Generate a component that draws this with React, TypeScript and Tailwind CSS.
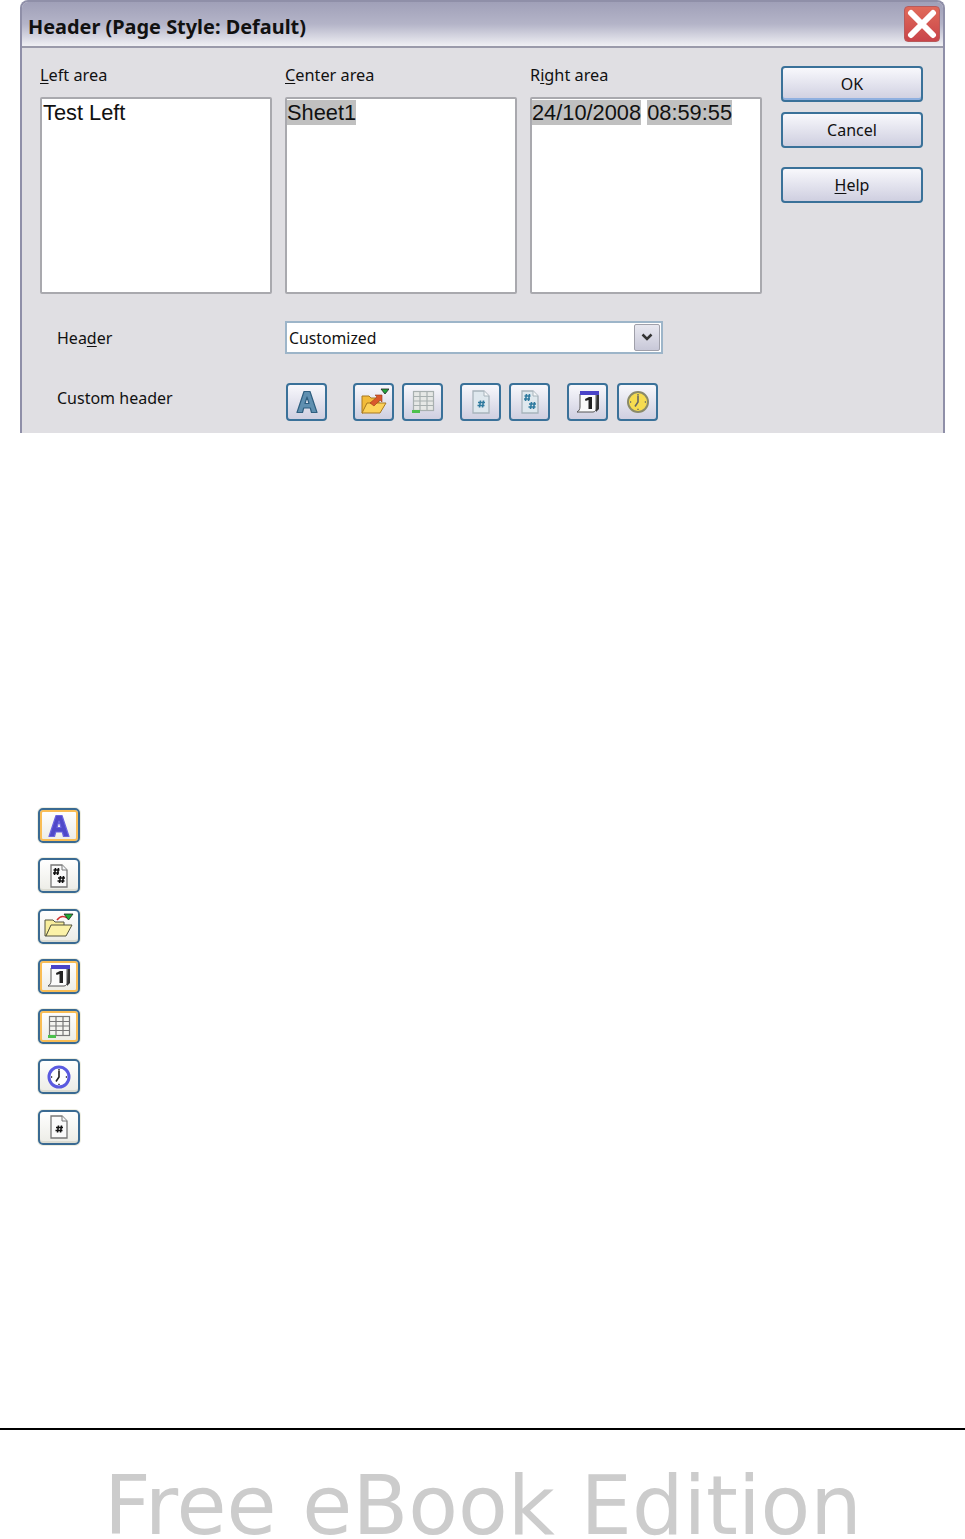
import React from "react";

const ui = "font-['Noto_Sans',sans-serif] text-[#111]";

const Ul = ({ children }: { children: React.ReactNode }) => <span className="underline underline-offset-2">{children}</span>;

const FontA = ({ fill, stroke }: { fill: string; stroke: string }) => (
  <svg width="24" height="26" viewBox="0 0 24 26">
    <path d="M9 2.500h6l7 21h-5.500l-1.200-4.500H8.700L7.500 23.500H2zM12 8l-2 6.500h4z" fill={fill} stroke={stroke} strokeWidth="1.200" strokeLinejoin="round" fillRule="evenodd" />
  </svg>
);

const Folder = () => (
  <svg width="30" height="28" viewBox="0 0 30 28">
    <path d="M3 8h7l2 2h8v6H8l-4 9H3z" fill="#f2bb3a" stroke="#a87820" />
    <path d="M8 15h19l-6 10H3z" fill="#fcd25a" stroke="#a87820" />
    <path d="M11 15l7-6-2-2h7v7l-2-2-6 6z" fill="#d9572c" stroke="#9c3a1a" strokeWidth=".6" />
    <path d="M22 1h8l-4 5z" fill="#22a83a" stroke="#222" strokeWidth=".8" />
  </svg>
);

const FolderPlain = () => (
  <svg width="34" height="26" viewBox="0 0 34 26">
    <path d="M3 7h8l2 2h9v4H9l-5 10H3z" fill="#f8ee9c" stroke="#55553f" />
    <path d="M9 12h21l-6 11H4z" fill="#fbf2a8" stroke="#55553f" />
    <path d="M15 7c3-4 7-4 10-2" fill="none" stroke="#d03030" strokeWidth="1.500" />
    <path d="M22 1h9l-4.500 6z" fill="#1fae35" stroke="#222" strokeWidth=".8" />
  </svg>
);

const Grid = ({ line, bg }: { line: string; bg: string }) => (
  <svg width="24" height="24" viewBox="0 0 24 24">
    <rect x="2.500" y="1.500" width="20" height="19" fill={bg} stroke={line} strokeWidth="1.200" />
    <path d="M2.500 6.500h20M2.500 11h20M2.500 15.500h20M9 1.500v19M16 1.500v19" stroke={line} strokeWidth="1.200" fill="none" />
    <rect x="1" y="20" width="8" height="3" fill="#4cc04c" />
  </svg>
);

const Page = ({ color, two, border, paper }: { color: string; two?: boolean; border: string; paper: string }) => (
  <svg width="22" height="26" viewBox="0 0 22 26">
    <path d="M3 2h11l5 5v17H3z" fill={paper} stroke={border} strokeWidth="1.300" />
    <path d="M14 2v5h5" fill="#f4f6f8" stroke={border} />
    {two && <path d="M5.500 7h6M5 10h6M7.500 5l-1 7M10.500 5l-1 7" stroke={color} strokeWidth="1.600" />}
    {two ? (
      <path d="M10 15h7M9.500 18h7M12.500 13l-1 7M15.500 13l-1 7" stroke={color} strokeWidth="1.600" fill="none" />
    ) : (
      <path d="M8 13.500h7M7.500 16.500h7M10.500 11.500l-1 7M13.500 11.500l-1 7" stroke={color} strokeWidth="1.600" fill="none" />
    )}
  </svg>
);

const Calendar = () => (
  <svg width="26" height="26" viewBox="0 0 26 26">
    <path d="M21 5v15c0 1-1 3-3 3H2c2-1 3-3 3-5V5z" fill="#fbfbfb" stroke="#555" />
    <path d="M21.500 6h2.500v14l-3 3z" fill="#333" />
    <rect x="5" y="2" width="19" height="4" fill="#4a44c8" />
    <path d="M10 10l4-2h3v12h-3.500v-9l-3 1z" fill="#222" />
  </svg>
);

const Clock = ({ face, ring, hand, ringWidth }: { face: string; ring: string; hand: string; ringWidth: number }) => (
  <svg width="26" height="26" viewBox="0 0 26 26">
    <circle cx="13" cy="13" r="10" fill={face} stroke={ring} strokeWidth={ringWidth} />
    <path d="M13 6.500V13l-3 4.500" fill="none" stroke={hand} strokeWidth="1.600" />
    <path d="M13 5v1.200M13 19.800V21M5 13h1.200M19.800 13H21" stroke={hand} strokeWidth="1.400" />
  </svg>
);

// raised toolbar button from the dialog
const ToolBtn = ({ children, className = "" }: { children: React.ReactNode; className?: string }) => (
  <div className={`w-[41px] h-[38px] flex items-center justify-center rounded-[4px] border-2 border-[#3a7199] bg-gradient-to-b from-[#f8f8fc] to-[#cfcfe0] ${className}`}>
    {children}
  </div>
);

// the icon legend buttons further down the page
const LegendBtn = ({ children, hot }: { children: React.ReactNode; hot?: boolean }) => (
  <div className={`w-[42px] h-[35px] flex items-center justify-center rounded-[5px] border-2 border-[#3a6a92] bg-gradient-to-b from-white to-[#ecece6] ${hot ? "shadow-[inset_0_0_0_2px_#f9bd55,0_0_0_1px_#eeeee2]" : "shadow-[inset_0_-2px_0_#dcdcd2,0_0_0_1px_#eeeee2]"}`}>
    {children}
  </div>
);

const AreaBox = ({ label, children }: { label: React.ReactNode; children: React.ReactNode }) => (
  <div className="w-[232px]">
    <div className={`${ui} text-[16.300px] leading-[22px] h-[33px]`}>{label}</div>
    <div className="h-[197px] bg-white border-2 border-[#a9a9ae] rounded-[2px] font-['Liberation_Sans',sans-serif] text-[21.800px] leading-[27px] text-[#111]">
      {children}
    </div>
  </div>
);

const Mark = ({ children }: { children: React.ReactNode }) => <span className="bg-[#c0c0c0]">{children}</span>;

const DlgBtn = ({ children, className = "" }: { children: React.ReactNode; className?: string }) => (
  <div className={`${ui} w-[142px] h-[36px] flex items-center justify-center text-[16px] rounded-[4px] border-2 border-[#3a7199] bg-gradient-to-b from-[#f8f8fc] to-[#cfcfe0] ${className}`}>
    {children}
  </div>
);

export default function App() {
  return (
    <div className="w-[965px] h-[1539px] overflow-hidden bg-white flex flex-col">
      <div className="ml-[20px] w-[925px] h-[433px] shrink-0 rounded-t-[8px] border-x-2 border-t-2 border-[#8f8fa8] bg-[#e0dfe3] flex flex-col overflow-hidden">
        <div className="h-[46px] shrink-0 flex items-center justify-between pl-[6px] pr-[3px] bg-gradient-to-b from-[#a0a0b8] via-[#b4b4c8] to-[#f0f0f4] border-b-2 border-[#9a9aaa]">
          <span className="pt-[5px] font-['Noto_Sans',sans-serif] font-bold text-[19.900px] text-[#111]">Header (Page Style: Default)</span>
          <div className="w-[36px] h-[36px] rounded-[4px] bg-gradient-to-b from-[#e06a5a] to-[#c9444a] border border-[#b85a5a] flex items-center justify-center">
            <svg width="30" height="30" viewBox="0 0 30 30">
              <path d="M4 4l22 22M26 4L4 26" stroke="#fff" strokeWidth="6" strokeLinecap="round" />
            </svg>
          </div>
        </div>

        <div className="flex pl-[18px] pr-[20px] pt-[16px]">
          <div className="flex gap-[13px]">
            <AreaBox label={<><Ul>L</Ul>eft area</>}><span className="pl-[1px]">Test Left</span></AreaBox>
            <AreaBox label={<><Ul>C</Ul>enter area</>}><Mark>Sheet1</Mark></AreaBox>
            <AreaBox label={<>R<Ul>i</Ul>ght area</>}><Mark>24/10/2008</Mark> <Mark>08:59:55</Mark></AreaBox>
          </div>
          <div className="ml-[19px] pt-[2px] flex flex-col">
            <DlgBtn className="border-[#2f63b0] shadow-[inset_0_-2px_0_#8fb0e0]">OK</DlgBtn>
            <DlgBtn className="mt-[10px]">Cancel</DlgBtn>
            <DlgBtn className="mt-[19px]"><span><Ul>H</Ul>elp</span></DlgBtn>
          </div>
        </div>

        <div className="flex items-center pl-[35px] mt-[27px]">
          <span className={`${ui} text-[16px] w-[228px]`}>Hea<Ul>d</Ul>er</span>
          <div className="w-[378px] h-[33px] bg-white border-2 border-[#9db5c9] flex items-center justify-between pl-[2px] pr-[1px]">
            <span className={`${ui} text-[15.800px] pt-[2px]`}>Customized</span>
            <div className="w-[26px] h-[27px] rounded-[2px] border border-[#a0a0aa] bg-gradient-to-b from-[#e8e8f0] to-[#c8c8d8] flex items-center justify-center">
              <svg width="12" height="9" viewBox="0 0 12 9"><path d="M1.500 1.500 6 6l4.500-4.500" fill="none" stroke="#333" strokeWidth="2.500" /></svg>
            </div>
          </div>
        </div>

        <div className="flex items-center pl-[35px] mt-[29px]">
          <span className={`${ui} text-[16px] w-[229px] mb-[8px]`}>Custom header</span>
          <div className="flex items-center">
            <ToolBtn><FontA fill="#5f8fb0" stroke="#2f5f80" /></ToolBtn>
            <ToolBtn className="ml-[26px]"><Folder /></ToolBtn>
            <ToolBtn className="ml-[8px]"><Grid line="#a8b0b0" bg="#e6e8e6" /></ToolBtn>
            <ToolBtn className="ml-[17px]"><Page color="#2f7a9f" border="#a8b4bc" paper="#dfe8ee" /></ToolBtn>
            <ToolBtn className="ml-[8px]"><Page color="#2f7a9f" two border="#a8b4bc" paper="#dfe8ee" /></ToolBtn>
            <ToolBtn className="ml-[17px]"><Calendar /></ToolBtn>
            <ToolBtn className="ml-[9px]"><Clock face="#f6dc50" ring="#8a8a6a" hand="#666" ringWidth={2} /></ToolBtn>
          </div>
        </div>
      </div>

      <div className="ml-[38px] mt-[375px] flex flex-col gap-[15.300px]">
        <LegendBtn hot><FontA fill="#4f48c8" stroke="#6a64e0" /></LegendBtn>
        <LegendBtn><Page color="#111" two border="#777" paper="#fafafa" /></LegendBtn>
        <LegendBtn><FolderPlain /></LegendBtn>
        <LegendBtn hot><Calendar /></LegendBtn>
        <LegendBtn hot><Grid line="#777" bg="#f4f4f0" /></LegendBtn>
        <LegendBtn><Clock face="#fff" ring="#5a5ae0" hand="#222" ringWidth={3} /></LegendBtn>
        <LegendBtn><Page color="#111" border="#777" paper="#fafafa" /></LegendBtn>
      </div>

      <div className="mt-[283px] h-[2px] bg-black shrink-0" />
      <div className="pl-[104px] pt-[43px] font-['DejaVu_Sans',sans-serif] text-[81.300px] leading-[66px] text-[#cccccc] whitespace-nowrap">
        Free eBook Edition
      </div>
    </div>
  );
}
